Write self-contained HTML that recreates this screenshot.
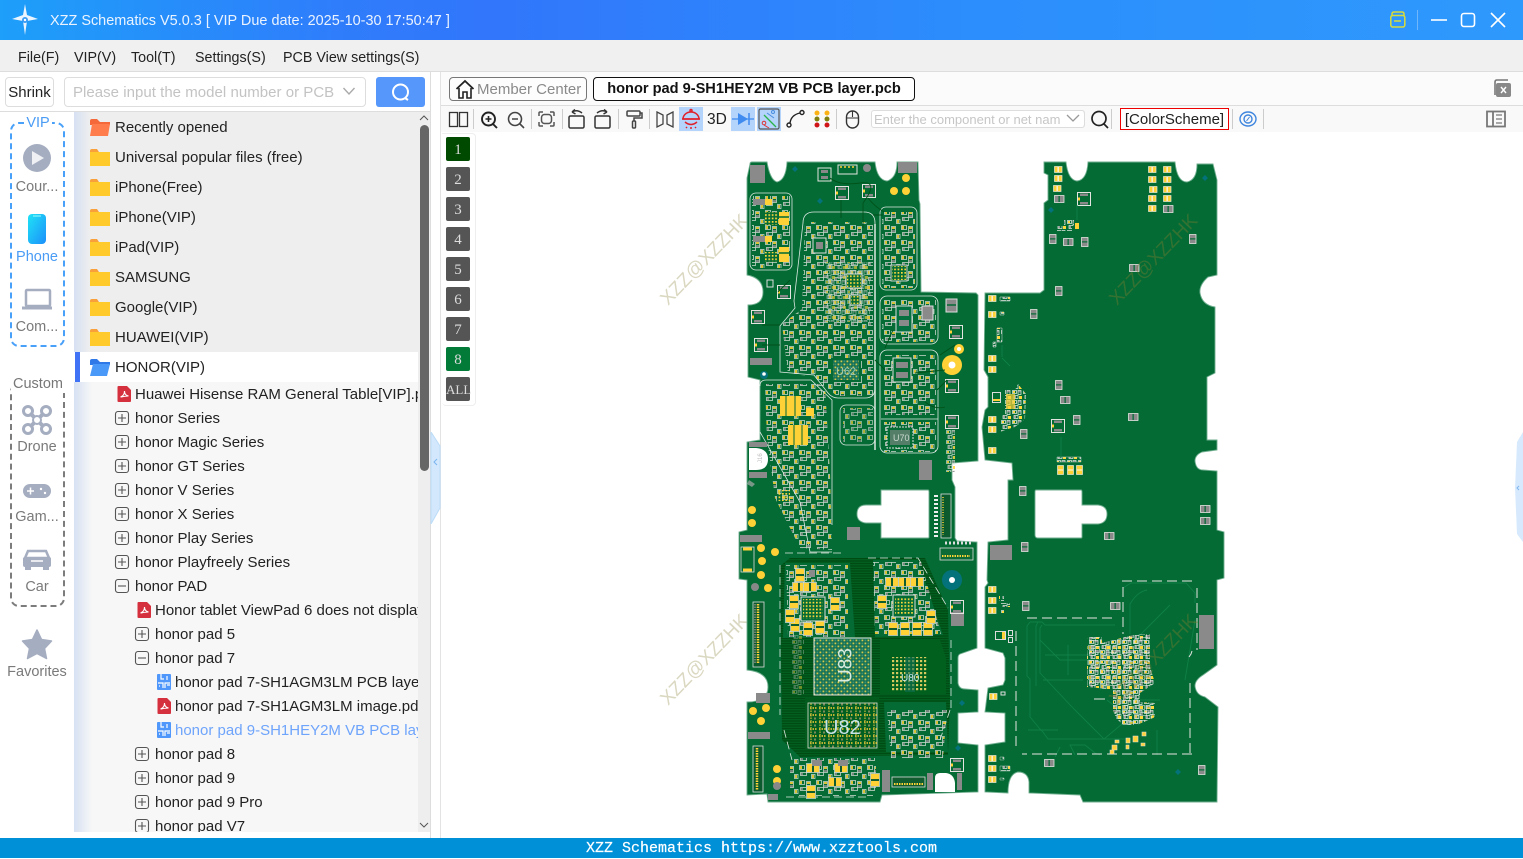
<!DOCTYPE html>
<html><head><meta charset="utf-8"><title>XZZ Schematics</title>
<style>
*{box-sizing:border-box}
html,body{margin:0;padding:0;width:1523px;height:858px;overflow:hidden;background:#fff;font-family:"Liberation Sans","Noto Sans CJK SC",sans-serif;font-size:15px;color:#222}
.a{position:absolute;white-space:nowrap}
#tb{left:0;top:0;width:1523px;height:40px;background:linear-gradient(90deg,#1d9ffa 0,#2f7dfb 22%,#3176fb 32%,#2c8efc 65%,#2e99fd 100%)}
.m{top:48px;line-height:20px;color:#222;font-size:14.3px}
.r{position:absolute;white-space:nowrap;line-height:24px;height:24px;transform:translateY(2px)}
.lb{position:absolute;left:0;width:74px;text-align:center;color:#7a7a7a;font-size:14.500px;line-height:20px;transform:translateY(2px)}
.ly{position:absolute;left:446px;width:24px;height:24px;border-radius:2px;background:#555;color:#ddd;text-align:center;font:15px/26px "Liberation Serif",serif}
</style></head><body>
<svg width="0" height="0" style="position:absolute"><defs>
<g id="f"><path d="M0 2q0-2 2-2h5l2 3h-9z" fill="#f9a03a"/><rect y="3" width="20" height="14" fill="#ffca2c"/></g>
<g id="pdf"><path d="M1.500 0H10l4 4v11q0 1-1 1H1.500q-1 0-1-1V1q0-1 1-1z" fill="#d5303e"/><path d="M3.500 11c3-1 4-3 4-6 0 3 1.500 4.500 4 5-2.500 0-5 .5-8 1z" fill="none" stroke="#fff" stroke-width="1.100"/></g>
<g id="pc"><rect width="14" height="16" rx="1" fill="#4f97fa"/><path d="M4 0v5H7M10 2v4M1 9h5v5M3 12h-1M8 14V9h5M10 11h3" stroke="#fff" stroke-width="1.200" fill="none"/></g>
<g id="pl"><rect x=".5" y=".5" width="13" height="13" rx="2.500" fill="none" stroke="#555" stroke-width="1.100"/><path d="M3 7h8M7 3v8" stroke="#555" stroke-width="1.100"/></g>
<g id="mi"><rect x=".5" y=".5" width="13" height="13" rx="2.500" fill="none" stroke="#555" stroke-width="1.100"/><path d="M3 7h8" stroke="#555" stroke-width="1.100"/></g>
</defs></svg>

<div class="a" id="tb"></div>
<svg class="a" style="left:8px;top:3px" width="36" height="34" viewBox="0 0 36 34"><path d="M17 1l2 11 11 4-11 2-2 14-2-14-11-2 11-4z" fill="#eaf5ff"/><circle cx="17" cy="17" r="3" fill="#3a9cf5"/><circle cx="17" cy="17" r="1.200" fill="#fff"/></svg>
<div class="a" style="left:50px;top:11px;font-size:14.460px;line-height:20px;color:#eaf3ff">XZZ Schematics V5.0.3 [ VIP Due date: 2025-10-30 17:50:47 ]</div>
<svg class="a" style="left:1385px;top:8px" width="130" height="24" viewBox="0 0 130 24"><path d="M7 8V6q0-2 2-2h8q2 0 2 2v2" fill="none" stroke="#d8dc3a" stroke-width="1.500"/><rect x="5.800" y="7.500" width="14" height="11.500" rx="2" fill="none" stroke="#d8dc3a" stroke-width="1.500"/><path d="M9 13h7" stroke="#d8dc3a" stroke-width="1.500"/><path d="M32.500 2v20" stroke="#6fb6fa"/><path d="M46 12h16" stroke="#fff" stroke-width="1.600"/><rect x="76.500" y="5.500" width="13" height="13" rx="2.500" fill="none" stroke="#fff" stroke-width="1.600"/><path d="M106 5l14 14M120 5l-14 14" stroke="#fff" stroke-width="1.600"/></svg>

<div class="a" style="left:0;top:40px;width:1523px;height:32px;background:#f0f0f0;border-bottom:1px solid #ddd"></div>
<div class="a m" style="left:18px">File(F)</div><div class="a m" style="left:74px">VIP(V)</div><div class="a m" style="left:131px">Tool(T)</div><div class="a m" style="left:195px">Settings(S)</div><div class="a m" style="left:283px">PCB View settings(S)</div>

<!-- left top row -->
<div class="a" style="left:5px;top:77px;width:49px;height:30px;border:1px solid #ddd;border-radius:4px;text-align:center;line-height:30px;color:#222;background:#fff">Shrink</div>
<div class="a" style="left:64px;top:77px;width:302px;height:30px;border:1px solid #ddd;border-radius:4px;line-height:30px;padding-left:8px;color:#c3c3c3;background:#fff;letter-spacing:.03px">Please input the model number or PCB</div>
<svg class="a" style="left:342px;top:87px" width="14" height="9"><path d="M1.500 1l5.500 6 5.500-6" fill="none" stroke="#aaa" stroke-width="1.400"/></svg>
<div class="a" style="left:376px;top:77px;width:49px;height:30px;background:#5697fb;border-radius:3px"></div>
<svg class="a" style="left:390px;top:82px" width="22" height="20"><circle cx="10.500" cy="10" r="7.500" fill="none" stroke="#fff" stroke-width="2"/><path d="M15 16l3 2" stroke="#fff" stroke-width="2"/></svg>
<div class="a" style="left:0;top:111px;width:431px;height:1px;background:#ddd"></div>

<!-- VIP col -->
<div class="a" style="left:10px;top:122px;width:55px;height:225px;border:2px dashed #49a0f8;border-radius:9px"></div>
<div class="a" style="left:24px;top:114px;width:28px;height:18px;background:#fff;color:#4a9cf5;text-align:center;line-height:18px;font-size:14.500px">VIP</div>
<div class="a" style="left:10px;top:383px;width:55px;height:224px;border:2px dashed #7c7c7c;border-radius:9px"></div>
<div class="a" style="left:11px;top:375px;width:54px;height:18px;background:#fff;color:#777;text-align:center;line-height:18px;font-size:14.500px">Custom</div>
<div class="lb" style="top:175px">Cour...</div>
<div class="lb" style="top:245px;color:#4a9cf5">Phone</div>
<div class="lb" style="top:315px">Com...</div>
<div class="lb" style="top:435px">Drone</div>
<div class="lb" style="top:505px">Gam...</div>
<div class="lb" style="top:575px">Car</div>
<div class="lb" style="top:660px">Favorites</div>
<svg class="a" style="left:0;top:130px" width="74" height="540" viewBox="0 130 74 540">
<defs><linearGradient id="ph" x1="0" y1="0" x2="1" y2="1"><stop offset="0" stop-color="#1fe3f5"/><stop offset="1" stop-color="#1c8ffb"/></linearGradient></defs>
<circle cx="37" cy="158" r="14" fill="#a5adc0"/><path d="M32 151l12 7-12 7z" fill="#eef0f4"/>
<rect x="28" y="214" width="18" height="30" rx="4" fill="url(#ph)"/><path d="M33 216h8" stroke="#9ff" stroke-width="1"/>
<rect x="26" y="290" width="24" height="16" rx="1" fill="none" stroke="#a5adc0" stroke-width="2.500"/><path d="M22 308h30" stroke="#a5adc0" stroke-width="3"/>
<g fill="none" stroke="#a5adc0" stroke-width="3"><circle cx="28" cy="411" r="4.500"/><circle cx="46" cy="411" r="4.500"/><circle cx="28" cy="429" r="4.500"/><circle cx="46" cy="429" r="4.500"/><path d="M30 413l14 14M44 413l-14 14" stroke-width="4"/></g><circle cx="37" cy="420" r="4" fill="#fff" stroke="#a5adc0" stroke-width="2"/>
<rect x="23" y="484" width="28" height="14" rx="7" fill="#a5adc0"/><path d="M27 491h7M30.500 487.500v7" stroke="#fff" stroke-width="1.500"/><circle cx="41" cy="489" r="1.200" fill="#fff"/><circle cx="45" cy="493" r="1.200" fill="#fff"/>
<path d="M28 551h18l3 7h-24z" fill="none" stroke="#a5adc0" stroke-width="2.500"/><rect x="23" y="557" width="28" height="10" rx="2" fill="#a5adc0"/><rect x="25" y="566" width="6" height="4" fill="#a5adc0"/><rect x="43" y="566" width="6" height="4" fill="#a5adc0"/><path d="M31 561h12" stroke="#fff" stroke-width="1.500"/>
<path d="M37 630l4.500 9.500 10 1.500-7 7.500 2 10-9.500-5-9.500 5 2-10-7-7.500 10-1.500z" fill="#a5adc0" stroke="#a5adc0" stroke-width="1.500" stroke-linejoin="round"/>
</svg>

<!-- tree -->
<div class="a" style="left:74px;top:112px;width:344px;height:720px;overflow:hidden;background:#f7f7f7">
<div style="position:absolute;left:0;top:0;width:344px;height:240px;background:#eee"></div>
<div style="position:absolute;left:0;top:240px;width:344px;height:30px;background:#fff"></div>
<div style="position:absolute;left:0;top:0;width:16px;height:240px;background:linear-gradient(90deg,#d6e1f3,rgba(214,225,243,0))"></div>
<div style="position:absolute;left:0;top:270px;width:18px;height:450px;background:linear-gradient(90deg,#d6e1f3,rgba(214,225,243,0))"></div>
<div style="position:absolute;left:1px;top:240px;width:5px;height:30px;background:#3f72f5"></div>
<svg style="position:absolute;left:0;top:0" width="344" height="720" viewBox="74 112 344 720">
<path d="M90 121q0-2 2-2h5l3 3h10v3H90z" fill="#f4683a"/><path d="M92 124h18l-2 12H90z" fill="#ff7d4d"/>
<use href="#f" x="90" y="149"/><use href="#f" x="90" y="179"/><use href="#f" x="90" y="209"/><use href="#f" x="90" y="239"/><use href="#f" x="90" y="269"/><use href="#f" x="90" y="299"/><use href="#f" x="90" y="329"/>
<path d="M90 361q0-2 2-2h5l3 3h10v3H90z" fill="#2f78e8"/><path d="M93 364h17l-3 12H90z" fill="#4a98f8"/>
<use href="#pdf" x="117" y="386"/><use href="#pl" x="115" y="411"/><use href="#pl" x="115" y="435"/><use href="#pl" x="115" y="459"/><use href="#pl" x="115" y="483"/><use href="#pl" x="115" y="507"/><use href="#pl" x="115" y="531"/><use href="#pl" x="115" y="555"/><use href="#mi" x="115" y="579"/>
<use href="#pdf" x="137" y="602"/><use href="#pl" x="135" y="627"/><use href="#mi" x="135" y="651"/>
<use href="#pc" x="157" y="674"/><use href="#pdf" x="157" y="698"/><use href="#pc" x="157" y="722"/>
<use href="#pl" x="135" y="747"/><use href="#pl" x="135" y="771"/><use href="#pl" x="135" y="795"/><use href="#pl" x="135" y="819"/>
</svg>
<div class="r" style="left:41px;top:2px">Recently opened</div>
<div class="r" style="left:41px;top:32px">Universal popular files (free)</div>
<div class="r" style="left:41px;top:62px">iPhone(Free)</div>
<div class="r" style="left:41px;top:92px">iPhone(VIP)</div>
<div class="r" style="left:41px;top:122px">iPad(VIP)</div>
<div class="r" style="left:41px;top:152px">SAMSUNG</div>
<div class="r" style="left:41px;top:182px">Google(VIP)</div>
<div class="r" style="left:41px;top:212px">HUAWEI(VIP)</div>
<div class="r" style="left:41px;top:242px">HONOR(VIP)</div>
<div class="r" style="left:61px;top:269px">Huawei Hisense RAM General Table[VIP].pdf</div>
<div class="r" style="left:61px;top:293px">honor Series</div>
<div class="r" style="left:61px;top:317px">honor Magic Series</div>
<div class="r" style="left:61px;top:341px">honor GT Series</div>
<div class="r" style="left:61px;top:365px">honor V Series</div>
<div class="r" style="left:61px;top:389px">honor X Series</div>
<div class="r" style="left:61px;top:413px">honor Play Series</div>
<div class="r" style="left:61px;top:437px">honor Playfreely Series</div>
<div class="r" style="left:61px;top:461px">honor PAD</div>
<div class="r" style="left:81px;top:485px">Honor tablet ViewPad 6 does not display</div>
<div class="r" style="left:81px;top:509px">honor pad 5</div>
<div class="r" style="left:81px;top:533px">honor pad 7</div>
<div class="r" style="left:101px;top:557px">honor pad 7-SH1AGM3LM PCB layer.pcb</div>
<div class="r" style="left:101px;top:581px">honor pad 7-SH1AGM3LM image.pdf</div>
<div class="r" style="left:101px;top:605px;color:#6ea4fb">honor pad 9-SH1HEY2M VB PCB layer.pcb</div>
<div class="r" style="left:81px;top:629px">honor pad 8</div>
<div class="r" style="left:81px;top:653px">honor pad 9</div>
<div class="r" style="left:81px;top:677px">honor pad 9 Pro</div>
<div class="r" style="left:81px;top:701px">honor pad V7</div>
</div>
<div class="a" style="left:418px;top:112px;width:12px;height:720px;background:#eee"></div>
<div class="a" style="left:420px;top:125px;width:9px;height:346px;background:#666;border-radius:5px"></div>
<svg class="a" style="left:418px;top:114px" width="12" height="8"><path d="M2 6l4-4 4 4" fill="none" stroke="#555"/></svg>
<svg class="a" style="left:418px;top:821px" width="12" height="8"><path d="M2 2l4 4 4-4" fill="none" stroke="#555"/></svg>
<div class="a" style="left:430px;top:72px;width:1px;height:766px;background:#ddd"></div>
<div class="a" style="left:440px;top:72px;width:1px;height:766px;background:#e3e3e3"></div>
<svg class="a" style="left:430px;top:432px" width="11" height="92"><path d="M1 0l9 14v62L1 92z" fill="#d3e8fc" stroke="#bcdcf8"/><path d="M7 27l-3 3 3 3" fill="none" stroke="#7bb4ef"/></svg>

<!-- tabs -->
<div class="a" style="left:441px;top:72px;width:1082px;height:34px;background:#fbfbfb;border-bottom:1px solid #ddd"></div>
<div class="a" style="left:449px;top:77px;width:138px;height:24px;border:1px solid #777;border-radius:4px;background:#fdfdfd;color:#8a8a8a;line-height:23px;padding-left:27px;font-size:15px">Member Center</div>
<svg class="a" style="left:455px;top:78px" width="20" height="22"><path d="M1.500 11L10 3l8.500 8" fill="none" stroke="#222" stroke-width="1.800"/><path d="M4 10v10h4v-6h4v6h4V10" fill="none" stroke="#222" stroke-width="1.600"/></svg>
<div class="a" style="left:593px;top:77px;width:322px;height:24px;border:1px solid #111;border-radius:4px;background:#fff;font-weight:bold;line-height:23px;text-align:center;color:#111;font-size:14.600px">honor pad 9-SH1HEY2M VB PCB layer.pcb</div>
<svg class="a" style="left:1493px;top:79px" width="20" height="20"><path d="M2 16V3q0-2 2-2h11" fill="none" stroke="#777" stroke-width="1.600"/><rect x="3" y="4" width="15" height="14" rx="2" fill="#888"/><path d="M8 8l5 6M13 8l-5 6" stroke="#fff" stroke-width="1.400"/></svg>

<!-- toolbar -->
<div class="a" style="left:441px;top:106px;width:1082px;height:26px;background:#f9f9f9"></div>
<div class="a" style="left:679px;top:107px;width:24px;height:24px;background:#b5d4fb"></div>
<div class="a" style="left:731px;top:107px;width:24px;height:24px;background:#b5d4fb"></div>
<div class="a" style="left:757px;top:107px;width:24px;height:24px;background:#b5d4fb"></div>
<svg class="a" style="left:441px;top:106px" width="1082" height="26" viewBox="441 106 1082 26">
<g stroke="#ccc"><path d="M473.500 109v20M531.500 109v20M562.500 109v20M618.500 109v20M649.500 109v20M836.500 109v20M1111.500 109v20M1232.500 109v20M1263.500 109v20"/></g>
<g fill="none" stroke="#333" stroke-width="1.300"><rect x="449.500" y="112.500" width="8" height="14"/><rect x="459.500" y="112.500" width="8" height="14"/></g>
<g fill="none" stroke="#222" stroke-width="1.900"><circle cx="488.500" cy="119" r="6.500"/><path d="M493 124l4 4"/></g><path d="M485.500 119h6M488.500 116v6" stroke="#222" stroke-width="1.600"/>
<g fill="none" stroke="#444" stroke-width="1.600"><circle cx="515" cy="119" r="6.500"/><path d="M520 124l4 4M512 119h6"/></g>
<g fill="none" stroke="#555" stroke-width="1.500"><path d="M539 116v-3q0-1 1-1h3M550 112h3q1 0 1 1v3M554 122v3q0 1-1 1h-3M543 126h-3q-1 0-1-1v-3"/><rect x="541.500" y="114.500" width="10" height="9" rx="3"/></g>
<g fill="none" stroke="#333" stroke-width="1.500"><rect x="569" y="116" width="15" height="12" rx="1.500"/><path d="M572 112q5-3 10 1M572 112l3-2.500M572 112l3.500 2"/><rect x="595" y="116" width="15" height="12" rx="1.500"/><path d="M607 112q-5-3-10 1M607 112l-3-2.500M607 112l-3.500 2"/></g>
<g fill="none" stroke="#444" stroke-width="1.500"><rect x="627" y="111" width="13" height="5" rx="1"/><path d="M640 113h2v5h-8v3"/><rect x="632.500" y="121" width="3" height="7" rx="1"/></g>
<g fill="none" stroke="#444" stroke-width="1.300"><path d="M657 112l6 3v9l-6 3zM673 112l-6 3v9l6 3z"/></g>
<g fill="none" stroke="#e0202a" stroke-width="1.500"><path d="M683 119a8 7 0 0 1 16 0z"/><path d="M682 119h18M685 122q6 5 12 0"/><circle cx="691" cy="110.500" r="1"/><path d="M686 127l1 1M691 127v2M696 127l-1 1"/></g>
<path d="M732 119h22" stroke="#3f8bf0" stroke-width="1.300"/><path d="M738 113l10 6-10 6z" fill="#3f8bf0"/><path d="M749 113v12" stroke="#3f8bf0" stroke-width="1.500"/>
<rect x="759" y="109" width="20" height="20" rx="1.500" fill="none" stroke="#555" stroke-width="1.200"/><path d="M764 115l12 12" stroke="#2cb34a" stroke-width="1.300"/><circle cx="764" cy="123" r="1.800" fill="none" stroke="#d33" stroke-width="1"/><path d="M764 125l5 3" stroke="#d33"/><path d="M767 113l7 5" stroke="#4a8de0"/><circle cx="773" cy="112" r="1.500" fill="none" stroke="#4a8de0"/>
<g fill="none" stroke="#222" stroke-width="1.400"><circle cx="789" cy="125" r="2"/><circle cx="802" cy="112.500" r="2"/><path d="M790 123q1-8 10-10"/></g>
<g><circle cx="817" cy="113" r="2.500" fill="#fbb216"/><circle cx="827" cy="113" r="2.500" fill="#fbb216"/><circle cx="817" cy="119" r="2.500" fill="#7f8010"/><circle cx="827" cy="119" r="2.500" fill="#7f8010"/><circle cx="817" cy="125" r="2.500" fill="#cf1518"/><circle cx="827" cy="125" r="2.500" fill="#cf1518"/></g>
<g fill="none" stroke="#333" stroke-width="1.400"><rect x="846.500" y="111" width="12" height="17" rx="6"/><path d="M852.500 111v6M846.500 118h12" stroke-width="1.100"/></g>
<g fill="none" stroke="#222" stroke-width="1.700"><circle cx="1099" cy="118.500" r="7"/><path d="M1104 124l4 4"/></g>
<g fill="none" stroke="#3f86de" stroke-width="1.400"><ellipse cx="1248" cy="119" rx="8" ry="7"/><circle cx="1248" cy="119" r="4"/></g><path d="M1246.500 121l3-4" stroke="#3f86de"/>
<g fill="none" stroke="#777" stroke-width="1.800"><rect x="1487" y="111.500" width="18" height="15"/><path d="M1493 111v16" /></g><path d="M1496 115h6M1496 119h6M1496 123h6" stroke="#777" stroke-width="1.200"/>
</svg>
<div class="a" style="left:707px;top:110px;line-height:20px;font-size:15.500px;color:#222">3D</div>
<div class="a" style="left:871px;top:110px;width:214px;height:18px;border:1px solid #ddd;border-radius:3px;background:#fff;color:#c6c6c6;font-size:13px;line-height:17px;padding-left:2px;overflow:hidden">Enter the component or net name</div>
<div class="a" style="left:1060px;top:111px;width:25px;height:16px;background:#fff;border-right:1px solid #ddd;border-radius:3px"></div>
<svg class="a" style="left:1066px;top:114px" width="14" height="9"><path d="M1 1l6 6 6-6" fill="none" stroke="#999" stroke-width="1.300"/></svg>
<div class="a" style="left:1120px;top:108px;width:109px;height:22px;border:1px solid #e00;background:#fff;text-align:center;line-height:22px;font-size:15px;color:#222">[ColorScheme]</div>

<!-- layers panel -->
<div class="a" style="left:442px;top:133px;width:34px;height:273px;background:#fff;border:1px solid #eee;border-left:0;border-radius:0 4px 4px 4px"></div>
<div class="ly" style="top:137px;background:#004a00">1</div><div class="ly" style="top:167px">2</div><div class="ly" style="top:197px">3</div><div class="ly" style="top:227px">4</div><div class="ly" style="top:257px">5</div><div class="ly" style="top:287px">6</div><div class="ly" style="top:317px">7</div><div class="ly" style="top:347px;background:#027b38">8</div><div class="ly" style="top:377px;font-size:13px">ALL</div>

<!-- PCB -->
<svg class="a" style="left:441px;top:132px" width="1082" height="706" viewBox="441 132 1082 706">
<defs>
<pattern id="pa" width="17" height="15" patternUnits="userSpaceOnUse">
<g fill="none" stroke="#e6e6e0" stroke-width=".8"><rect x=".5" y=".5" width="5" height="4"/><rect x="7.500" y="1.500" width="4" height="6"/><rect x="1.500" y="7.500" width="6" height="3"/><rect x="12.500" y="9.500" width="3.500" height="4"/></g>
<rect x="1" y="1" width="2" height="3" fill="#fed136"/><rect x="8" y="2" width="3" height="2" fill="#fed136"/><rect x="8" y="5" width="3" height="2" fill="#8a8a8a"/><rect x="2" y="8" width="2" height="2" fill="#8a8a8a"/><rect x="13" y="10" width="2" height="3" fill="#fed136"/>
</pattern>
<pattern id="pb" width="11" height="10" patternUnits="userSpaceOnUse">
<g fill="none" stroke="#efeee8" stroke-width=".7"><rect x=".5" y=".5" width="4" height="3"/><rect x="6" y=".5" width="3" height="4"/><rect x="2" y="5.500" width="4" height="3"/></g>
<rect x="1" y="1" width="2" height="2" fill="#ffd83d"/><rect x="6.500" y="1" width="2" height="1.500" fill="#8a8a8a"/><rect x="7" y="6" width="3" height="3" fill="#ffd83d"/><rect x="2.500" y="6" width="1.500" height="2" fill="#999"/>
</pattern>
<pattern id="pc2" width="3.400" height="3.400" patternUnits="userSpaceOnUse"><rect width="1.700" height="1.700" fill="#ffd83d"/></pattern>
<pattern id="u83" width="6" height="6" patternUnits="userSpaceOnUse"><rect width="6" height="6" fill="#0f6e52"/><rect x=".5" y=".5" width="1.800" height="1.800" fill="#d6c84a"/><rect x="3.500" y=".5" width="1.800" height="1.800" fill="#3f8f74"/><rect x=".5" y="3.500" width="1.800" height="1.800" fill="#3f8f74"/><rect x="3.500" y="3.500" width="1.800" height="1.800" fill="#d6c84a"/></pattern>
<pattern id="u82" width="9" height="7" patternUnits="userSpaceOnUse"><path d="M0 1h7" stroke="#fed136" stroke-width="1.400" stroke-dasharray="1.500 1"/><path d="M1 1v6" stroke="#c9b93c" stroke-width="1.200" stroke-dasharray="1.500 1"/><rect x="4" y="3.500" width="2" height="2" fill="#7d8a5c"/></pattern>
<pattern id="u80" width="4" height="4" patternUnits="userSpaceOnUse"><rect width="2.200" height="2.200" fill="#d6c95d"/></pattern>
<pattern id="drk" width="5" height="5" patternUnits="userSpaceOnUse"><rect width="5" height="5" fill="#02601f"/><path d="M0 1h5M0 3.500h5" stroke="#004a14" stroke-width="1.200"/></pattern>
<g id="y"><rect x=".5" y=".5" width="7.500" height="6" fill="#fed136" stroke="#e8e8dc" stroke-width=".7"/><rect x="3.500" y="1" width="1.300" height="5" fill="#f6f6f0"/></g>
<g id="yv"><rect x=".5" y=".5" width="6" height="9" fill="#fed136" stroke="#e8e8dc" stroke-width=".7"/><rect x="1" y="4.500" width="5" height="1" fill="#f6f6f0"/></g>
<g id="gh"><rect x=".5" y=".5" width="9.500" height="7" fill="#8a8a8a" stroke="#e4e4e0" stroke-width=".8"/><rect x="4.500" y="1" width="1.300" height="6" fill="#046b35"/></g>
<g id="gv"><rect x=".5" y=".5" width="6.500" height="9" fill="#8a8a8a" stroke="#e4e4e0" stroke-width=".8"/><rect x="1" y="4.300" width="5.500" height="1.200" fill="#046b35"/></g>
<g id="bx"><rect x=".5" y=".5" width="13" height="13" fill="none" stroke="#e4e4e0" stroke-width="1"/><rect x="3" y="1.500" width="8" height="2.500" fill="#8a8a8a"/><rect x="3" y="10" width="8" height="2.500" fill="#8a8a8a"/><rect x="1" y="5.500" width="2" height="3" fill="#fed136"/></g>
<g id="Yv"><rect x=".5" y=".5" width="9" height="13" fill="#115d2f" stroke="#e8e8e0" stroke-width=".7"/><rect x="1" y="1" width="8" height="5" fill="#fed136"/><rect x="1" y="8" width="8" height="5" fill="#fed136"/></g>
<g id="Yh"><rect x=".5" y=".5" width="13" height="9" fill="#115d2f" stroke="#e8e8e0" stroke-width=".7"/><rect x="1" y="1" width="5" height="8" fill="#fed136"/><rect x="8" y="1" width="5" height="8" fill="#fed136"/></g>
</defs>

<!-- right handle -->
<path d="M1523 432l-6 10-2 46 2 46 6 8z" fill="#d7eafd"/>
<path d="M1519 486l-2 2 2 2" stroke="#7fb7ef" fill="none"/>

<!-- watermarks white -->
<g font-family="'Liberation Sans',sans-serif" font-size="19" fill="#bdb98f" opacity=".55">
<text transform="translate(668 306) rotate(-46)">XZZ@XZZHK</text>
<text transform="translate(668 706) rotate(-46)">XZZ@XZZHK</text>
</g>

<!-- left board -->
<path fill-rule="evenodd" fill="#046b35" stroke="#6fae8e" stroke-width=".9" d="M750 164Q750 162 752 162L767 162Q770 180 777 182Q786 180 787 162L875 162Q877 180 887 181Q897 178 897 162L918 162L919 200L920 204L921 292L976 293L978 295L978 461L952 463L952 480L955 487L955 538L957 541L977 542L977 648L960 654Q958 655 958 658L958 683Q959 689 965 689L978 690L978 712L958 713L958 743L978 745L978 792L882 795L880 802L768 802L767 794L747 795L747 702Q768 702 768 687Q768 672 747 670L747 580L739 579L739 532L747 530L747 442L760 440L760 380L748 377L748 305Q763 305 763 292Q763 278 747 275L747 178Z M881 490L928 490Q929 490 929 492L929 537Q929 538 928 538L881 538L881 523L866 523Q857 522 857 514Q857 505 866 505L881 505Z"/>
<!-- right board -->
<path fill-rule="evenodd" fill="#046b35" stroke="#6fae8e" stroke-width=".9" d="M1044 162L1066 162Q1068 180 1077 181Q1087 180 1088 162L1175 162Q1177 182 1187 182Q1197 180 1197 164L1213 164L1217 180L1217 275L1208 277Q1199 285 1200 293Q1202 305 1215 307L1215 373L1207 377L1207 440L1217 440L1217 450L1202 452Q1195 455 1195 461Q1196 470 1203 470L1217 471L1217 530L1224 532L1224 578L1217 580L1217 665L1203 675Q1195 680 1195 686Q1196 695 1205 697L1218 707L1217 802L1083 802L1080 795L1029 793L1029 782Q1028 772 1018 772Q1008 774 1008 793L985 792L985 745L1005 742L1005 713L985 712L988 688L1003 685L1005 680L1005 658L1003 653L985 648L985 587L988 583L987 580L988 542L1008 540L1008 480L1013 480L1012 463L985 460L982 427L985 410L988 407L988 377L984 370L985 293L1040 293L1044 290L1044 203L1048 200L1048 175L1044 173Z M1036 490L1081 490Q1082 490 1082 492L1082 505L1098 505Q1107 506 1107 514Q1107 523 1098 524L1082 524L1082 537Q1082 538 1081 538L1038 538Q1035 538 1035 535L1035 492Q1035 490 1036 490Z"/>

<!-- dark trace area bottom left -->
<path d="M780 566L790 558L925 558L948 610L950 700L948 755L800 757L782 740Z" fill="url(#drk)"/>
<path d="M785 563h65l5 75h-72z" fill="#046b35"/>
<path d="M873 560h45l25 75-68 2z" fill="#046b35"/>
<path d="M880 640h60l6 18v36l-66 0z" fill="#02601f"/>
<path d="M805 698h74v52h-74z" fill="#025a1c"/>
<path d="M884 702h62l2 50-62 0z" fill="#046b35"/>

<!-- outlines -->
<g fill="none" stroke="#dbe8e0" stroke-width=".8">
<rect x="750" y="193" width="42" height="77" rx="6"/>
<path d="M803 223q0-11 11-11h50q11 0 11 11V388q0 10-10 10H838q-6 0-10-5l-14-18-34-3V326l15-18-1-7z"/>
<rect x="880" y="207" width="37" height="83" rx="6"/>
<rect x="880" y="296" width="58" height="48" rx="7"/>
<rect x="880" y="350" width="58" height="103" rx="7"/>
<rect x="840" y="405" width="35" height="40" rx="6"/>
<path d="M760 386q0-6 6-6h45l21 20v125"/><path d="M760 432l40 70 10 50h22"/>
<path d="M881 419h57"/>
<path d="M875 224v226" stroke-width="1.500"/>
<path d="M785 553h60M868 558h50l30 50M951 640v70M950 710l-10 30M780 565v150M784 730l8 30M786 797h80" stroke-dasharray="8 4"/>
</g>

<!-- patch fills left top -->
<g opacity=".85">
<path d="M805 222h68v174h-36l-24-20-25-2-6-50 20-15z" fill="url(#pa)"/>
<path d="M825 262h45v60h-45z" fill="url(#pb)" opacity=".7"/>
<path d="M882 212h33v76h-33z" fill="url(#pa)"/>
<path d="M882 300h54v42h-54z" fill="url(#pa)"/>
<path d="M884 355h52v60h-52z" fill="url(#pa)"/>
<path d="M884 422h52v30h-52z" fill="url(#pa)"/>
<path d="M752 196h38v72h-38z" fill="url(#pa)"/>
<path d="M765 384h60l5 90 2 76-32-2-25-50-8-60z" fill="url(#pa)"/>
<path d="M843 408h30v34h-30z" fill="url(#pa)" opacity=".8"/>
<path d="M946 428h9v44h-9z" fill="url(#pb)"/>
<path d="M786 565h62v72h-60z" fill="url(#pa)"/>
<path d="M873 562h48l20 72h-66z" fill="url(#pa)"/>
<path d="M790 758h86v38h-86z" fill="url(#pa)"/>
<path d="M887 710h60l-4 48h-52z" fill="url(#pa)"/>
<path d="M792 635h12v60h-12z" fill="url(#pb)" opacity=".5"/>
</g>

<!-- chips -->
<rect x="765" y="212" width="13" height="13" fill="#046b35" /><rect x="765" y="212" width="13" height="13" fill="url(#pc2)"/>
<rect x="765" y="252" width="12" height="10" fill="#046b35"/><rect x="765" y="252" width="12" height="10" fill="url(#pc2)"/>
<rect x="779" y="212" width="10" height="13" fill="#fed136"/><rect x="779" y="247" width="10" height="15" fill="#fed136"/>
<path d="M779 217h10M779 253h10" stroke="#046b35" stroke-width="1.500"/>
<rect x="753" y="199" width="12" height="6" fill="#8a8a8a"/><rect x="765" y="199" width="7" height="6" fill="#fed136"/>
<rect x="753" y="236" width="12" height="6" fill="#8a8a8a"/><rect x="765" y="236" width="7" height="6" fill="#fed136"/>
<rect x="846" y="274" width="16" height="14" fill="#046b35" stroke="#ddd"/><rect x="847" y="275" width="14" height="12" fill="url(#pc2)"/>
<rect x="850" y="295" width="10" height="10" fill="#046b35" stroke="#ddd" /><rect x="851" y="296" width="8" height="8" fill="url(#pc2)"/>
<rect x="891" y="265" width="16" height="16" fill="#046b35" stroke="#ccc"/><rect x="892" y="266" width="14" height="14" fill="url(#pc2)"/>
<rect x="831" y="358" width="30" height="24" fill="#046b35"/><rect x="833" y="360" width="26" height="20" fill="url(#u83)"/>
<text x="836" y="375" font-size="11" fill="#9fc9b5" font-family="'Liberation Sans',sans-serif">U62</text>
<rect x="896" y="306" width="16" height="26" fill="#057040" stroke="#ddd"/><path d="M899 310h10v6h-10zM899 320h10v6h-10z" fill="#8a8a8a"/><rect x="922" y="306" width="11" height="14" fill="#8a8a8a" stroke="#ddd"/>
<rect x="893" y="358" width="18" height="24" fill="#046b35" stroke="#ddd"/><path d="M896 362h12v6h-12zM896 372h12v6h-12z" fill="#888"/>
<rect x="887" y="427" width="26" height="21" fill="#046b35" stroke="#ddd" stroke-dasharray="2 1"/><rect x="890" y="430" width="20" height="15" fill="#8a8a8a" opacity=".6"/>
<text x="893" y="441" font-size="9" fill="#c9d8ce" font-family="'Liberation Sans',sans-serif">U70</text>
<rect x="813" y="238" width="13" height="15" fill="#046b35" stroke="#ddd"/><rect x="816" y="242" width="7" height="7" fill="#888"/>
<rect x="780" y="396" width="21" height="20" fill="#fed136"/><path d="M786 396v20M795 396v20" stroke="#046b35"/>
<rect x="788" y="425" width="20" height="20" fill="#fed136"/><path d="M794 425v20M802 425v20" stroke="#046b35"/><rect x="806" y="408" width="8" height="8" fill="#fed136"/>
<rect x="778" y="490" width="12" height="11" fill="url(#pc2)"/>

<!-- bottom big comps -->
<use href="#Yv" x="795" y="568"/><use href="#Yh" x="792" y="582"/><use href="#Yh" x="803" y="582"/><use href="#Yv" x="789" y="595"/><use href="#Yv" x="830" y="597"/><use href="#Yv" x="790" y="618"/><use href="#Yv" x="803" y="622"/><use href="#Yv" x="815" y="620"/><use href="#Yv" x="785" y="609"/>
<rect x="801" y="597" width="24" height="24" fill="#046b35" stroke="#ddd"/><rect x="803" y="599" width="20" height="20" fill="url(#pc2)"/>
<rect x="809" y="570" width="6" height="7" fill="#8a8a8a"/>
<use href="#Yh" x="885" y="577"/><use href="#Yh" x="898" y="577"/><use href="#Yh" x="910" y="577"/><use href="#Yv" x="877" y="595"/><use href="#Yv" x="888" y="622"/><use href="#Yv" x="900" y="622"/><use href="#Yv" x="912" y="622"/><use href="#Yv" x="923" y="622"/><use href="#Yv" x="926" y="610"/>
<rect x="893" y="595" width="22" height="22" fill="#046b35" stroke="#ddd"/><rect x="895" y="597" width="18" height="18" fill="url(#pc2)"/>
<use href="#Yh" x="806" y="763"/><use href="#Yh" x="834" y="763"/><use href="#Yv" x="870" y="773"/><use href="#Yh" x="828" y="777"/><use href="#Yv" x="806" y="785"/>
<rect x="812" y="760" width="10" height="6" fill="#8a8a8a"/><rect x="838" y="760" width="10" height="6" fill="#8a8a8a"/>
<!-- U83 etc -->
<rect x="814" y="638" width="57" height="57" fill="url(#u83)" stroke="#e8e8e0"/>
<rect x="808" y="703" width="69" height="45" fill="#025f22" stroke="#e0e0d8" stroke-width=".8"/><rect x="808" y="703" width="69" height="45" fill="url(#u82)"/>
<rect x="892" y="657" width="35" height="35" fill="url(#u80)"/><rect x="905" y="657" width="10" height="35" fill="#0f6e52" opacity=".6"/>
<text transform="translate(851.500 683) rotate(-90)" font-family="'Liberation Sans',sans-serif" font-size="19" fill="#d8ece0">U83</text>
<text x="824" y="734" font-family="'Liberation Sans',sans-serif" font-size="20" fill="#c7e4ea">U82</text>
<text x="901" y="681" font-family="'Liberation Sans',sans-serif" font-size="10" fill="#c7e4ea">U80</text>
<!-- connectors -->
<rect x="753" y="602" width="11" height="65" fill="#0b5a2d" stroke="#ddd" stroke-width=".8"/><path d="M758 604v60" stroke="#fed136" stroke-width="2.500" stroke-dasharray="1.500 1"/><path d="M755 604v60" stroke="#8a8a8a" stroke-width="1.500" stroke-dasharray="1.500 1"/>
<rect x="753" y="746" width="10" height="46" fill="#0b5a2d" stroke="#ddd" stroke-width=".8"/><path d="M757 748v42" stroke="#fed136" stroke-width="2.500" stroke-dasharray="1.500 1"/>
<rect x="940" y="548" width="33" height="12" fill="#0b6a35" stroke="#ddd" stroke-width=".8"/><path d="M942 556h28" stroke="#fed136" stroke-width="2" stroke-dasharray="1.500 1"/><path d="M945 543h26" stroke="#ddd" stroke-width="3" stroke-dasharray="2 2"/>
<rect x="941" y="494" width="10" height="44" fill="#0b5a2d" stroke="#ddd" stroke-width=".8"/><path d="M936 495v42" stroke="#eee" stroke-width="4" stroke-dasharray="2 2"/><path d="M943 497v38" stroke="#fed136" stroke-width="1.500" stroke-dasharray="1 1.500"/>
<rect x="892" y="777" width="33" height="10" fill="#115d2f" stroke="#ddd" stroke-width=".8"/><path d="M894 784h29" stroke="#fed136" stroke-width="2" stroke-dasharray="1.500 1"/>
<rect x="741" y="547" width="13" height="25" fill="#046b35" stroke="#ddd" stroke-width=".8"/><path d="M743 549h9M743 570h9" stroke="#fed136" stroke-width="3"/>
<!-- grey -->
<g fill="#8a8a8a">
<rect x="750" y="165" width="15" height="18"/><rect x="898" y="162" width="19" height="11"/><rect x="750" y="358" width="22" height="7"/><rect x="919" y="460" width="13" height="20"/>
<rect x="847" y="527" width="13" height="13"/><rect x="951" y="612" width="13" height="14"/><rect x="740" y="535" width="22" height="7"/><rect x="756" y="693" width="14" height="10"/><rect x="748" y="732" width="22" height="7"/><rect x="768" y="794" width="10" height="6"/><rect x="882" y="770" width="8" height="22"/><rect x="927" y="773" width="6" height="17"/><rect x="957" y="773" width="5" height="17"/>
<rect x="990" y="545" width="22" height="15"/><rect x="1199" y="615" width="15" height="34"/>
<rect x="749" y="442" width="18" height="5"/><rect x="749" y="472" width="18" height="6"/>
</g>
<path d="M749 448h7q12 1 12 11 0 11-12 11h-7z" fill="#fff"/><path d="M935 792v-14q0-5 5-5h6q8 1 9 10v9z" fill="#fff"/>
<text transform="translate(762 463) rotate(-90)" font-size="6" fill="#bbb" font-family="'Liberation Sans',sans-serif">J16</text>
<!-- yellow circles -->
<g fill="#fed136"><circle cx="906" cy="178" r="4"/><circle cx="894" cy="191" r="4"/><circle cx="906" cy="191" r="4"/><circle cx="752" cy="510" r="4"/><circle cx="752" cy="523" r="4"/><circle cx="761" cy="548" r="4"/><circle cx="775" cy="552" r="4"/><circle cx="762" cy="561" r="4"/><circle cx="761" cy="575" r="4"/><circle cx="768" cy="588" r="4"/><circle cx="753" cy="711" r="4"/><circle cx="766" cy="708" r="4"/><circle cx="761" cy="721" r="4"/><circle cx="777" cy="769" r="4"/><circle cx="777" cy="781" r="4"/><circle cx="952" cy="365" r="10"/><circle cx="959" cy="349" r="5"/></g>
<g fill="#888"><circle cx="755" cy="587" r="4"/><circle cx="777" cy="786" r="4"/><circle cx="867" cy="168" r="4"/></g>
<circle cx="952" cy="365" r="3.500" fill="#fff"/><circle cx="959" cy="349" r="2" fill="#fff"/>
<circle cx="952" cy="580" r="10" fill="#04727a"/><circle cx="952" cy="580" r="3" fill="#fff"/>
<circle cx="764" cy="375" r="4" fill="#04727a"/><circle cx="764" cy="374" r="1.800" fill="#fff"/>
<g fill="#04727a"><path d="M795 166l3 3-3 3-3-3zM820 198l3 3-3 3-3-3zM962 700l3 3-3 3-3-3zM958 745l3 3-3 3-3-3zM1205 175l3 3-3 3-3-3zM1051 207l3 3-3 3-3-3zM1178 769l3 3-3 3-3-3z"/></g>
<!-- parts left top -->
<rect x="818" y="168" width="13" height="13" fill="none" stroke="#e4e4e0"/><path d="M821 170h7v3h-7zM821 176h7v3h-7z" fill="#888"/>
<rect x="838" y="165" width="19" height="9" fill="none" stroke="#e4e4e0"/><path d="M840 167h15" stroke="#fed136" stroke-dasharray="2 2" stroke-width="1.500"/>
<use href="#bx" x="835" y="186"/><use href="#bx" x="862" y="184"/><use href="#bx" x="777" y="285"/><use href="#bx" x="751" y="310"/><use href="#bx" x="754" y="338"/><use href="#bx" x="949" y="325"/><use href="#bx" x="945" y="379"/><use href="#bx" x="945" y="415"/><use href="#bx" x="950" y="600"/><use href="#bx" x="950" y="758"/>
<rect x="946" y="299" width="11" height="13" fill="#8a8a8a" stroke="#ddd"/><path d="M947 305h9" stroke="#046b35" stroke-width="1.500"/>
<rect x="767" y="280" width="6" height="7" fill="none" stroke="#ddd"/>
<!-- dark traces -->
<g fill="none" stroke="#005218" stroke-width=".9">
<path d="M830 178q10 8 30 5t3 20v25M841 200v18M868 198q6 8 16 14M762 325h18M762 345h18M790 280l-12 12M873 215h10M893 330l-8 18M945 370l-30 3M955 345l-15 10M945 407q-10 3-20-5M947 380l-10 10M875 360l10 10"/>
</g>
<!-- right board comps -->
<use href="#y" x="1054" y="166"/><use href="#y" x="1054" y="175"/><use href="#y" x="1053" y="185"/><use href="#gh" x="1054" y="195"/>
<use href="#y" x="1148" y="166"/><use href="#y" x="1163" y="166"/><use href="#y" x="1148" y="176"/><use href="#y" x="1163" y="176"/><use href="#y" x="1149" y="186"/><use href="#y" x="1163" y="186"/><use href="#y" x="1148" y="195"/><use href="#y" x="1163" y="195"/><use href="#y" x="1148" y="205"/><use href="#gh" x="1163" y="205"/>
<use href="#bx" x="1077" y="192"/>
<path d="M1064 219h10v7h-10zM1057 226h15v5h-15z" fill="url(#pb)"/><rect x="1075" y="223" width="4" height="6" fill="#fed136"/>
<use href="#gv" x="1049" y="234"/><use href="#gh" x="1063" y="238"/><use href="#gv" x="1081" y="237"/><use href="#gv" x="1189" y="234"/><use href="#gh" x="1129" y="264"/><use href="#gv" x="1055" y="286"/><use href="#gv" x="1030" y="309"/>
<use href="#y" x="988" y="295"/><use href="#y" x="988" y="311"/><use href="#y" x="988" y="355"/><use href="#y" x="988" y="366"/><use href="#y" x="988" y="416"/><use href="#y" x="988" y="426"/><use href="#y" x="988" y="447"/>
<path d="M1000 297h10v4h-10zM1000 312h4v3h-4zM997 328h5v14h-5zM993 342h3v5h-3z" fill="url(#pb)" stroke="#ddd" stroke-width=".5"/>
<path d="M1005 390h10l3-6 8 10-1 25-10 8-7 2-8 3 1-16 4-2z" fill="url(#pb)"/><rect x="1006" y="394" width="9" height="15" fill="#fed136" opacity=".7"/>
<rect x="992.500" y="392.500" width="8" height="10" fill="none" stroke="#ddd"/><rect x="993" y="399" width="7" height="2" fill="#fed136"/>
<use href="#gv" x="1055" y="380"/><use href="#gh" x="1060" y="396"/><use href="#gh" x="1128" y="413"/><use href="#gv" x="1073" y="415"/><use href="#gv" x="1020" y="429"/><use href="#bx" x="1051" y="419"/>
<path d="M1057 457h24v5h-24z" fill="url(#pb)" stroke="#ddd" stroke-width=".4"/>
<use href="#yv" x="1057" y="465"/><use href="#yv" x="1067" y="465"/><use href="#yv" x="1076" y="465"/>
<use href="#gv" x="1019" y="486"/><use href="#gh" x="1200" y="505"/><use href="#gh" x="1200" y="517"/><use href="#gh" x="1104" y="532"/><use href="#gv" x="1021" y="542"/>
<use href="#y" x="988" y="586"/><use href="#y" x="988" y="597"/><use href="#y" x="988" y="607"/>
<path d="M999 596h5v5h-5zM1000 603h10v4h-10zM1000 609h4v4h-4z" fill="url(#pb)"/>
<use href="#gv" x="1022" y="601"/><use href="#gh" x="1110" y="602"/>
<rect x="995.500" y="631.500" width="10" height="8" fill="none" stroke="#ddd"/><rect x="1002" y="632" width="3" height="7" fill="#fed136"/><rect x="1008.500" y="630.500" width="4" height="5" fill="none" stroke="#ddd"/><rect x="1008.500" y="637.500" width="4" height="5" fill="none" stroke="#ddd"/>
<use href="#y" x="989" y="693"/><rect x="1001" y="692" width="4" height="3" fill="none" stroke="#ddd"/>
<use href="#y" x="988" y="755"/><use href="#y" x="988" y="765"/><use href="#y" x="988" y="776"/>
<path d="M1000 766h10v5h-10zM1000 757h4v3h-4zM1000 778h4v2h-4z" fill="url(#pb)" stroke="#ddd" stroke-width=".4"/>
<use href="#gh" x="1044" y="759"/><use href="#gv" x="1198" y="765"/>
<!-- light traces right -->
<g fill="none" stroke="#108047" stroke-width=".9">
<path d="M1077 205v15M1002 345v12M1002 358l8 8M1061 437v20"/>
<path d="M1030 622h12l3 3h70M1030 622l-3 4v50l3 3v38l10 12 3 3 5 7h80M1038 622l-2 4v60M1042 625l-2 3v45l34 36 30 30 30-25M1040 640l20 20h40v30M1045 655h50M1043 680h40M1068 645v30M1028 730h30M1123 588l8-5h55l9 10v10M1147 590q-10 2-17 14v30M1170 605l-30 30M1195 620l-10 60M1140 700h20M1075 755l-5-10h15l10 8 5 2M1055 757l5-10M1157 730v25M1107 700l15 12h30"/>
</g>
<!-- dashed right -->
<g fill="none" stroke="#e6e6e0" stroke-width="1" stroke-dasharray="10 5">
<path d="M1122 581h75M1197 588v62M1190 683v72M1192 754H1022M1016 746V630M1027 618h90M1123 587v47"/>
</g>
<path d="M1094 699h11M1189 657l2-3 1-3" fill="none" stroke="#e6e6e0"/>
<!-- right cluster -->
<path d="M1088 637L1102 637L1102 643L1133 635L1150 634L1150 667L1155 683L1140 693L1140 702L1155 703L1155 717L1137 725L1123 725L1116 718L1113 710L1113 690L1098 688L1087 687L1087 655Z" fill="url(#pb)"/>
<path d="M1088 637L1102 637L1102 643L1133 635L1150 634L1150 667L1155 683L1140 693L1140 702L1155 703L1155 717L1137 725L1123 725L1116 718L1113 710L1113 690L1098 688L1087 687L1087 655Z" fill="url(#pa)" opacity=".7"/>
<path d="M1115 740h4v3h-4zM1126 738h4v5h-4zM1133 736h5v6h-5zM1142 732h4v4h-4zM1112 745h5v5h-5zM1126 745h3v4h-3zM1141 743h4v3h-4zM1110 750h4v4h-4z" fill="#fed136" stroke="#ddd" stroke-width=".6"/>
<!-- watermark on boards -->
<g font-family="'Liberation Sans',sans-serif" font-size="19" fill="#7d7d2e" opacity=".4">
<text transform="translate(1117 306) rotate(-46)">XZZ@XZZHK</text>
<text transform="translate(1117 706) rotate(-46)">XZZ@XZZHK</text>
</g>
<path d="M749 480l6 4-3 3-5-3z" fill="#aaa" opacity=".7"/>
</svg>

<div class="a" style="left:0;top:838px;width:1523px;height:20px;background:#0090d8;color:#fff;text-align:center;font:15px/21px 'Liberation Mono',monospace;-webkit-text-stroke:.2px #fff">XZZ Schematics https://www.xzztools.com</div>
</body></html>
